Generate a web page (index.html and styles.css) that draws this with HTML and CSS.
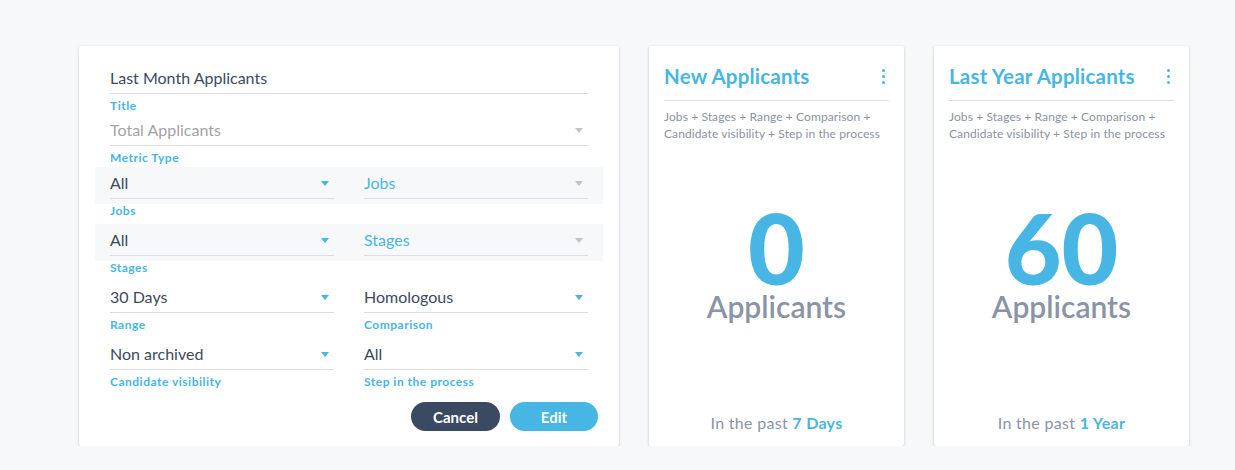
FILE: index.html
```html
<!DOCTYPE html>
<html lang="en">

<head>
    <meta charset="UTF-8">
    <meta name="viewport" content="width=device-width, initial-scale=1.0">
    <title>Dashboard Widgets</title>
    <link rel="stylesheet" href="styles.css">
</head>

<body>
    <div class="board">
        <!-- Widget editor -->
        <div class="card editor">
            <div class="field">
                <div class="control title-input">Last Month Applicants</div>
                <div class="label label-title">Title</div>
            </div>
            <div class="field">
                <div class="control disabled">Total Applicants <span class="caret gray"></span></div>
                <div class="label label-metric">Metric Type</div>
            </div>

            <div class="shaded">
                <div class="control">All <span class="caret"></span></div>
                <div class="control placeholder">Jobs <span class="caret gray"></span></div>
            </div>
            <div class="label label-after">Jobs</div>

            <div class="shaded">
                <div class="control">All <span class="caret"></span></div>
                <div class="control placeholder">Stages <span class="caret gray"></span></div>
            </div>
            <div class="label label-after">Stages</div>

            <div class="row">
                <div class="field">
                    <div class="control">30 Days <span class="caret"></span></div>
                    <div class="label">Range</div>
                </div>
                <div class="field">
                    <div class="control">Homologous <span class="caret"></span></div>
                    <div class="label">Comparison</div>
                </div>
            </div>
            <div class="row">
                <div class="field">
                    <div class="control">Non archived <span class="caret"></span></div>
                    <div class="label">Candidate visibility</div>
                </div>
                <div class="field">
                    <div class="control">All <span class="caret"></span></div>
                    <div class="label">Step in the process</div>
                </div>
            </div>

            <div class="actions">
                <button class="btn btn-dark">Cancel</button>
                <button class="btn btn-blue">Edit</button>
            </div>
        </div>

        <!-- Metric widgets -->
        <div class="card metric">
            <div class="metric-head">
                <h3>New Applicants</h3>
                <span class="kebab"><i></i><i></i><i></i></span>
            </div>
            <p class="metric-desc">Jobs + Stages + Range + Comparison + Candidate visibility + Step in the process</p>
            <div class="metric-value">0</div>
            <div class="metric-unit">Applicants</div>
            <div class="metric-foot">In the past <strong>7 Days</strong></div>
        </div>

        <div class="card metric">
            <div class="metric-head">
                <h3>Last Year Applicants</h3>
                <span class="kebab"><i></i><i></i><i></i></span>
            </div>
            <p class="metric-desc">Jobs + Stages + Range + Comparison + Candidate visibility + Step in the process</p>
            <div class="metric-value">60</div>
            <div class="metric-unit">Applicants</div>
            <div class="metric-foot">In the past <strong>1 Year</strong></div>
        </div>
    </div>
</body>

</html>
```

FILE: styles.css
```css
body {
    font-family: Lato, "Open Sans", sans-serif;
    margin: 0;
    padding: 0;
    background-color: #f7f8fa;
    color: #3c4a60;
}

.board {
    display: flex;
    gap: 30px;
    padding: 46px 0 0 79px;
}

.card {
    background-color: white;
    border-radius: 2px;
    box-shadow: 0 1px 3px rgba(0, 0, 0, 0.22);
    height: 400px;
    box-sizing: border-box;
}

/* editor */

.editor {
    width: 540px;
    padding: 16px 31px 15px 31px;
}

.control {
    position: relative;
    height: 31px;
    line-height: 31px;
    border-bottom: 1px solid #dcdde0;
    font-size: 16px;
    color: #3c4a60;
}

.control.disabled {
    color: #a3a3a6;
}

.control.placeholder {
    color: #47b6e4;
}

.caret {
    position: absolute;
    right: 5px;
    top: 14px;
    width: 0;
    height: 0;
    border-left: 4.5px solid transparent;
    border-right: 4.5px solid transparent;
    border-top: 5px solid #47b6e4;
}

.caret.gray {
    border-top-color: #c2c3c6;
}

.label {
    font-size: 12px;
    font-weight: bold;
    letter-spacing: 0.5px;
    line-height: 13px;
    color: #47b6e4;
    margin: 5px 0 7px;
}

.label-title {
    margin-bottom: 2px;
}

.label-metric {
    margin-bottom: 3px;
}

.label-after {
    margin: 0 0 7px;
}

.shaded {
    display: grid;
    grid-template-columns: 224px 224px;
    gap: 30px;
    background-color: #f7f8fa;
    margin: 0 -15px;
    padding: 0 15px 5px;
}

.row {
    display: grid;
    grid-template-columns: 224px 224px;
    gap: 30px;
}

.actions {
    display: flex;
    justify-content: flex-end;
    gap: 10px;
    margin: 7px -10px 0 0;
}

.btn {
    height: 29px;
    border: none;
    border-radius: 15px;
    color: white;
    font-family: inherit;
    font-size: 15px;
    font-weight: bold;
    cursor: pointer;
}

.btn-dark {
    width: 89px;
    background-color: #3b4a63;
}

.btn-blue {
    width: 88px;
    background-color: #47b6e4;
}

/* metric widgets */

.metric {
    width: 255px;
    padding: 18px 15px 14px;
    display: flex;
    flex-direction: column;
    align-items: center;
}

.metric-head {
    align-self: stretch;
    display: flex;
    justify-content: space-between;
    align-items: center;
    height: 24px;
    padding-bottom: 12px;
    border-bottom: 1px solid #dcdde0;
}

.metric-head h3 {
    margin: 0;
    font-size: 20.5px;
    letter-spacing: 0.2px;
    color: #47b6e4;
}

.kebab {
    display: flex;
    flex-direction: column;
    gap: 3px;
    margin-right: 4px;
}

.kebab i {
    width: 3px;
    height: 3px;
    border-radius: 50%;
    background-color: #47b6e4;
}

.metric-desc {
    align-self: stretch;
    margin: 7px 0 0;
    font-size: 12px;
    letter-spacing: 0.1px;
    line-height: 17px;
    color: #8b93a1;
}

.metric-value {
    margin-top: 69px;
    font-size: 98px;
    font-weight: 900;
    line-height: 72px;
    color: #47b6e4;
}

.metric-unit {
    margin-top: 8px;
    font-size: 30px;
    font-weight: 600;
    line-height: 30px;
    color: #8a94a6;
}

.metric-foot {
    margin-top: auto;
    font-size: 16px;
    letter-spacing: 0.3px;
    color: #8a94a6;
}

.metric-foot strong {
    color: #47b6e4;
}
```
